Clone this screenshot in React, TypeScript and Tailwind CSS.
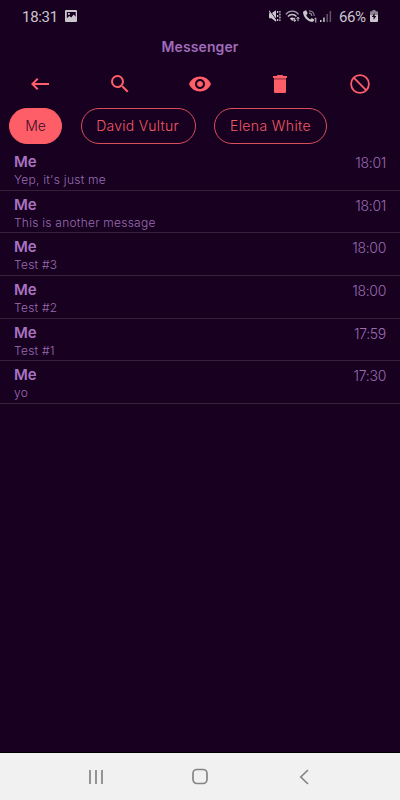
import type { ComponentType } from 'react';
import { MdKeyboardBackspace, MdSearch, MdVisibility } from 'react-icons/md';

interface Message {
  sender: string;
  text: string;
  time: string;
}

interface Contact {
  name: string;
  selected?: boolean;
  className: string;
}

interface IconProps {
  size?: number;
}

function TrashIcon({ size = 24 }: IconProps) {
  return (
    <svg width={size} height={size} viewBox="0 0 24 24" fill="currentColor">
      <path d="M5 4h3.5l1-1h5l1 1H19v2H5z" />
      <path fill="#b8434f" d="M6 6h12v1.2H6z" />
      <path d="M6 7.200h12V20a1 1 0 0 1-1 1H7a1 1 0 0 1-1-1z" />
    </svg>
  );
}

function BlockIcon({ size = 24 }: IconProps) {
  return (
    <svg width={size} height={size} viewBox="0 0 24 24" fill="none" stroke="currentColor" strokeWidth="1.8">
      <circle cx="12" cy="12" r="8.9" />
      <path d="m5.700 5.700 12.600 12.600" />
    </svg>
  );
}

const actions: { label: string; icon: ComponentType<IconProps> }[] = [
  { label: 'Back', icon: MdKeyboardBackspace },
  { label: 'Search', icon: MdSearch },
  { label: 'View', icon: MdVisibility },
  { label: 'Delete', icon: TrashIcon },
  { label: 'Block', icon: BlockIcon },
];

const contacts: Contact[] = [
  { name: 'Me', selected: true, className: 'w-[53px]' },
  { name: 'David Vultur', className: 'w-[115px] tracking-[0.25px] pr-px' },
  { name: 'Elena White', className: 'w-[113px] tracking-[0.38px]' },
];

const messages: Message[] = [
  { sender: 'Me', text: "Yep, it's just me", time: '18:01' },
  { sender: 'Me', text: 'This is another message', time: '18:01' },
  { sender: 'Me', text: 'Test #3', time: '18:00' },
  { sender: 'Me', text: 'Test #2', time: '18:00' },
  { sender: 'Me', text: 'Test #1', time: '17:59' },
  { sender: 'Me', text: 'yo', time: '17:30' },
];

function StatusBar() {
  return (
    <div className="flex h-8 items-center pl-[22px] pr-[22px] font-['Roboto',sans-serif] text-[15px] leading-8 text-[#cbc6ce]">
      <span className="w-[35px] whitespace-nowrap pt-px tracking-[-0.3px]">18:31</span>
      <svg className="ml-2" width="12" height="12" viewBox="0 0 12 12">
        <path
          fill="currentColor"
          fillRule="evenodd"
          d="M1 0h10a1 1 0 0 1 1 1v10a1 1 0 0 1-1 1H1a1 1 0 0 1-1-1V1a1 1 0 0 1 1-1Zm.8 2v6.2L4.4 6l1.8 1.6 2.5-3 2 2.2V2ZM3 3h1.8v1.8H3Z"
        />
      </svg>

      <div className="ml-auto flex items-center">
        <svg width="12" height="12" viewBox="0 0 12 12" fill="none" stroke="currentColor">
          <path d="M0 3.300h2.500L7 .3v11.400L2.500 8.300H0z" fill="currentColor" stroke="none" />
          <path d="M.5.2 7.500 10" stroke="#170020" strokeWidth="1" />
          <path d="M0 .8 7 11" strokeWidth="1.200" />
          <path d="M8.600 1v2M8.600 5v2M8.600 9v2M10.900 1v1.500M10.900 3.500v2M10.900 6.500v2M10.900 9.500V11" strokeWidth="1.300" />
        </svg>
        <svg className="ml-1" width="16" height="12" viewBox="0 0 16 12" fill="none" stroke="currentColor">
          <path d="M.8 4.3C4.4.1 10.2.1 13.6 4.3" stroke="#a39baa" strokeWidth="1.3" />
          <path d="M2.9 6.500c2.400-2.700 6.200-2.700 8.600 0" strokeWidth="1.3" />
          <path d="M4.800 8.500c1.200-1.400 3.300-1.400 4.600 0L7.200 11z" fill="currentColor" stroke="none" />
          <path d="M9.700 11.500V7.800M8.500 9.900l1.200 1.500 1.200-1.500M13 7.200v4M11.700 8.800 13 7.200l1.300 1.600" strokeWidth="1" />
        </svg>
        <svg className="ml-[2px]" width="14" height="13" viewBox="0 0 14 13" fill="none" stroke="currentColor">
          <path
            d="M1.1 1.1 2.5.4c.5-.2.9 0 1.1.5l.9 2.2c.2.5 0 .8-.3 1L3.2 5c.8 2 2.2 3.500 4 4.400l1-1c.3-.3.7-.3 1-.1l1.800 1.100c.4.3.5.7.2 1.200-.7 1.200-1.800 1.500-3.200 1.200C3.800 10.700.7 6.800.1 3c-.1-.8.3-1.500 1-1.900Z"
            fill="currentColor"
            stroke="none"
          />
          <path d="M6 .8c3-.1 5.200 2 5.200 5.200M6 3.200c1.700 0 2.800 1.100 2.800 2.800" stroke="#8b8290" strokeWidth="1.2" />
          <path d="M11.500 8.700 12.800 8v4.600" />
        </svg>
        <svg className="ml-[3px]" width="12" height="12" viewBox="0 0 12 12" fill="currentColor">
          <path d="M0 10h1.5v2H0zM3.2 7.500h1.500V12H3.200z" />
          <path fill="#62536a" d="M6.400 4h1.500v8H6.400zM9.600 1h1.500v11H9.600z" />
        </svg>
        <span className="ml-[7px] w-[27px] whitespace-nowrap pt-px tracking-[-0.4px]">66%</span>
        <svg className="ml-1" width="8" height="12" viewBox="0 0 8 12">
          <path fill="#8d8492" d="M2.500 0h3v1.300H7a1 1 0 0 1 1 1V5H0V2.300a1 1 0 0 1 1-1h1.500z" />
          <path fill="currentColor" d="M0 5h8v6a1 1 0 0 1-1 1H1a1 1 0 0 1-1-1z" />
          <path fill="#170020" d="M4.600 3 1.800 7h1.800v3l2.700-4H4.600z" />
        </svg>
      </div>
    </div>
  );
}

function ContactChip({ name, selected, className }: Contact) {
  return (
    <button
      className={[
        'flex h-9 shrink-0 items-center justify-center whitespace-nowrap rounded-full border text-sm font-light',
        selected ? 'border-[#fe5e67] bg-[#fe5e67] text-[#3a0c2b]' : 'border-[#d9505c] text-[#f05a64]',
        className,
      ].join(' ')}
    >
      {name}
    </button>
  );
}

function MessageRow({ sender, text, time }: Message) {
  return (
    <li className="flex h-[42.65px] justify-between border-b border-[#35203c] pl-[14px] pr-[14px]">
      <div className="pt-[5px]">
        <p className="text-[15px] font-semibold leading-[18px] text-[#a873c1]">{sender}</p>
        <p className="text-[12px] font-light leading-[18px] tracking-[0.24px] text-[#9a6cb0]">{text}</p>
      </div>
      <time className="pt-[5px] text-[14px] font-light leading-5 tracking-[-0.3px] text-[#9a6cb0]">{time}</time>
    </li>
  );
}

function NavigationBar() {
  return (
    <div className="h-12 border-t border-black bg-[#f1f1f1] text-[#858585]">
      <div className="flex h-full items-center justify-between px-[87px]">
        <svg width="18" height="16" viewBox="0 0 18 16" fill="none" stroke="currentColor" strokeWidth="1.7">
          <path d="M3 1v14M9 1v14M15 1v14" />
        </svg>
        <svg width="18" height="18" viewBox="0 0 18 18" fill="none" stroke="currentColor" strokeWidth="1.7">
          <rect x="2" y="1.500" width="14" height="14" rx="4" />
        </svg>
        <svg width="18" height="16" viewBox="0 0 18 16" fill="none" stroke="currentColor" strokeWidth="1.7">
          <path d="M13 1 5.800 8l7.200 7" />
        </svg>
      </div>
    </div>
  );
}

export default function App() {
  return (
    <div className="flex h-[800px] w-[400px] flex-col overflow-hidden bg-[#170020] font-['Inter',sans-serif]">
      <StatusBar />
      <h1 className="h-[30px] text-center text-[14px] font-semibold leading-[30px] tracking-[0.1px] text-[#a06dba]">
        Messenger
      </h1>

      <div className="grid h-11 grid-cols-5 place-items-center text-[#fe5e67]">
        {actions.map(({ label, icon: Icon }) => (
          <button key={label} aria-label={label}>
            <Icon size={24} />
          </button>
        ))}
      </div>

      <div className="flex gap-[18.5px] pl-[9px] pt-[2px]">
        {contacts.map((contact) => (
          <ContactChip key={contact.name} {...contact} />
        ))}
      </div>

      <ul className="mt-[4px] flex-1">
        {messages.map((message, index) => (
          <MessageRow key={index} {...message} />
        ))}
      </ul>

      <NavigationBar />
    </div>
  );
}
